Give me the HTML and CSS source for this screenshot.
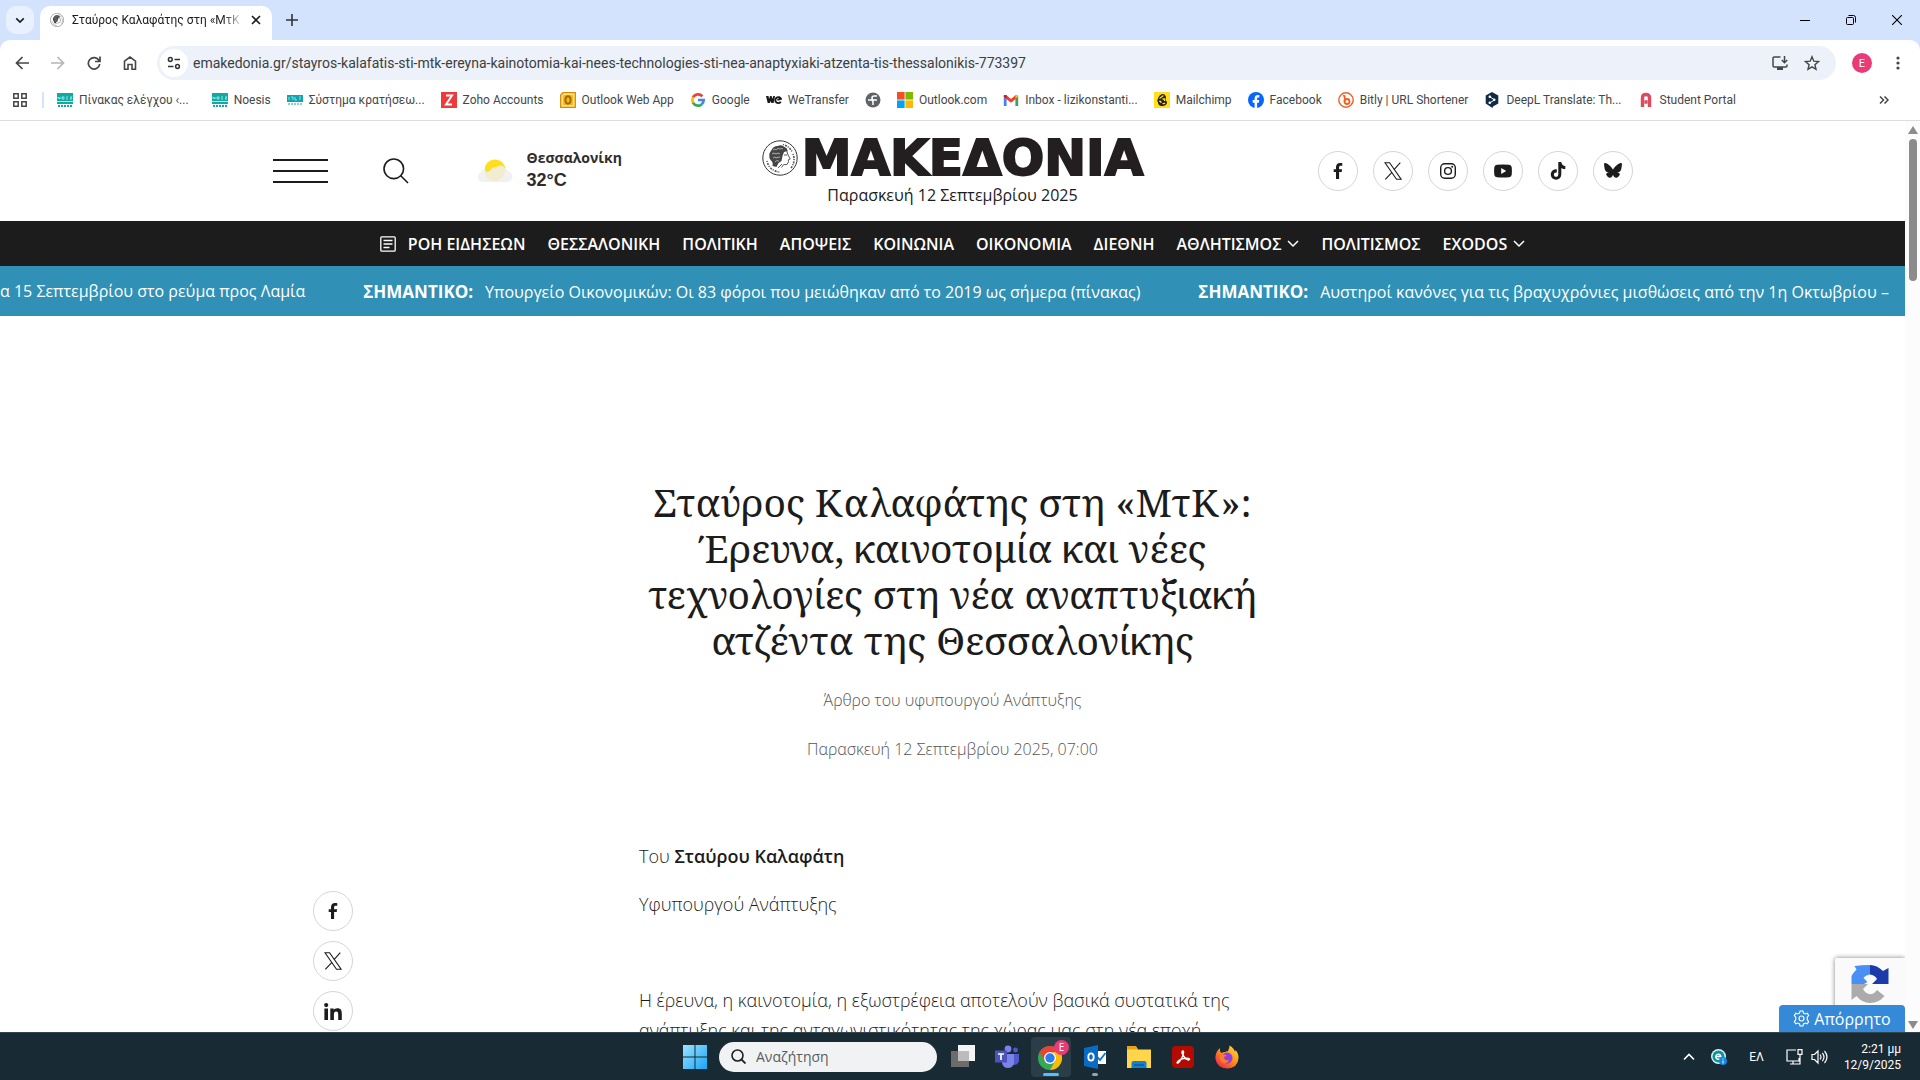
FILE: index.html
```html
<!DOCTYPE html>
<html lang="el">
<head>
<meta charset="UTF-8">
<meta name="viewport" content="width=device-width, initial-scale=1.0">
<title>Σταύρος Καλαφάτης στη «ΜτΚ»</title>
<link rel="stylesheet" href="styles.css">
</head>
<body>

<!-- Shared symbols -->
<svg class="sprite" aria-hidden="true">
<symbol id="i-facebook" viewBox="0 0 16 16"><path fill="currentColor" d="M6 16V9H3.700V6.200H6V4.200C6 1.500 7.600 0 10 0c1 0 2 .1 2.300.2v2.600h-1.500C9.500 2.800 9.100 3.400 9.100 4.400v1.800h3L11.700 9H9.100v7z"/></symbol>
<symbol id="i-x" viewBox="0 0 18 18"><path fill="none" stroke="currentColor" stroke-width="1.100" d="M1 .8h4.600l11.500 16.400h-4.600zM16.300.6l-6.500 7.200M8.200 10.100l-6.900 7.300"/></symbol>
<symbol id="i-instagram" viewBox="0 0 16 16"><g fill="none" stroke="currentColor" stroke-width="1.400"><rect x=".7" y=".7" width="14.600" height="14.600" rx="4"/><circle cx="8" cy="8" r="3.400"/></g><circle cx="12.200" cy="3.800" r="1" fill="currentColor"/></symbol>
<symbol id="i-youtube" viewBox="0 0 18 14"><path fill="currentColor" fill-rule="evenodd" d="M3 .8Q9 0 15 .8q2.500.4 2.700 2.500.4 3.700 0 7.400-.2 2.100-2.700 2.500-6 .7-12 0Q.5 12.800.3 10.700q-.4-3.700 0-7.400Q.5 1.200 3 .8zM7.200 4v6l5-3z"/></symbol>
<symbol id="i-tiktok" viewBox="0 0 16 18"><path fill="currentColor" d="M8.300 0h3c.2 2.400 1.700 3.900 4 4.100v3c-1.500 0-2.800-.4-4-1.200v6.200c0 3.600-2.400 5.700-5.200 5.700-3 0-5.300-2.300-5.300-5.200 0-3.300 2.800-5.600 6-5.200v3.200c-1.500-.4-2.900.6-2.900 2.100 0 1.200.9 2.100 2.100 2.100 1.400 0 2.300-.9 2.300-2.600z"/></symbol>
<symbol id="i-butterfly" viewBox="0 0 18 16"><path fill="currentColor" d="M9 6.800C7.800 4.400 4.600 1 1.500.1.300-.2 0 .6.100 1.700c.1 1.700.6 4.500 1 5.400.6 1.700 2 2.300 4 2.100-2.500.4-3.800 1.600-2.200 3.500C5.500 16.500 8 14.500 9 11.700c1 2.800 3.500 4.800 6.100 1 1.600-1.900.3-3.100-2.200-3.500 2 .2 3.400-.4 4-2.100.4-.9.9-3.700 1-5.400.1-1.100-.2-1.900-1.400-1.600C13.400 1 10.200 4.400 9 6.800z"/></symbol>
<symbol id="i-linkedin" viewBox="0 0 18 17"><circle cx="2.200" cy="2.100" r="2.100" fill="currentColor"/><path fill="currentColor" d="M.4 5.600h3.600V17H.4zM6.300 5.600h3.400v1.500c.6-1.100 1.900-1.800 3.600-1.800 3.700 0 4.500 2.200 4.500 5.500V17h-3.600v-5.500c0-1.500-.2-3.100-2.100-3.100s-2.200 1.500-2.200 3V17H6.300z"/></symbol>
<symbol id="i-down" viewBox="0 0 12 8"><path fill="none" stroke="currentColor" stroke-width="1.500" d="M1 1l5 5 5-5"/></symbol>
<symbol id="i-coin" viewBox="0 0 36 36"><circle cx="18" cy="18" r="17.200" fill="#fff" stroke="#333" stroke-width="1"/><path d="M7 26a14 14 0 0 0 11 6M5 21a14 14 0 0 0 2 5M21 4.500a14 14 0 0 1 9 7M31 14a14 14 0 0 1-2 14" fill="none" stroke="#555" stroke-width="1.600" stroke-dasharray="1 1.200 2 1"/><path fill="#444" d="M9.500 10q2-4 6-4 4-2 7 1 3 1 3 4l-3.500 1-1.500 4-1 5-3 2-2 4-4-1q1-4-2-6-3-5 1-10z"/><path d="M24.500 10l1.500 5 2.300 4-2 .8.200 2-1.500 2.700-3.500.2-2 2.800M22 15h3M20 24l-4 4" fill="none" stroke="#444" stroke-width=".9"/><path d="M11 10q2-2 3 0 2-3 4-1 2-1 3 0M10 14q2-2 4 0 2-2 4 0M11 18q2-2 3 0 2-1 4-1M13 22q1-2 4-1" fill="none" stroke="#ccc" stroke-width=".8"/></symbol>
<symbol id="i-noesis" viewBox="0 0 16 16"><path fill="#12a9a4" d="M0 1h16v11H0z"/><path d="M1 7V5l2 2V5M5 5h2v2H5zM9 5h2M9 7h2M13 5h2l-2 2h2" fill="none" stroke="#a5ebe4" stroke-width=".9"/><path d="M0 9.500h16" stroke="#fff" stroke-width=".8"/><path d="M1 14h14" stroke="#12a9a4" stroke-width="2" stroke-dasharray="2 1"/></symbol>
</svg>

<div class="browser">

<header class="chrome">
<div class="tab-strip">
<button class="tab-search" aria-label="Αναζήτηση καρτελών"><svg width="10" height="7" viewBox="0 0 12 8"><path d="M1.500 1.500L6 6l4.500-4.500" fill="none" stroke="#1f1f1f" stroke-width="2"/></svg></button>
<div class="tab">
<svg class="tab-icon" width="14" height="14"><use href="#i-coin"/></svg>
<span class="tab-title">Σταύρος Καλαφάτης στη «ΜτΚ</span>
<button class="icon-button" aria-label="Κλείσιμο"><svg width="10" height="10" viewBox="0 0 10 10"><path d="M1 1l8 8M9 1L1 9" stroke="#1f1f1f" stroke-width="1.600"/></svg></button>
</div>
<button class="icon-button new-tab" aria-label="Νέα καρτέλα"><svg width="12" height="12" viewBox="0 0 12 12"><path d="M6 0v12M0 6h12" stroke="#333" stroke-width="1.600"/></svg></button>
<div class="window-controls">
<button class="icon-button" aria-label="Ελαχιστοποίηση"><svg width="10" height="10" viewBox="0 0 10 10"><path d="M0 5.500h10" stroke="#000"/></svg></button>
<button class="icon-button" aria-label="Επαναφορά"><svg width="10" height="10" viewBox="0 0 10 10"><path d="M.5 3.500a1 1 0 0 1 1-1h5a1 1 0 0 1 1 1v5a1 1 0 0 1-1 1h-5a1 1 0 0 1-1-1zM2.500.5h5a2 2 0 0 1 2 2v5" fill="none" stroke="#000"/></svg></button>
<button class="icon-button" aria-label="Κλείσιμο παραθύρου"><svg width="10" height="10" viewBox="0 0 10 10"><path d="M0 0l10 10M10 0L0 10" stroke="#000" stroke-width="1.100"/></svg></button>
</div>
</div>

<div class="toolbar">
<button class="icon-button" aria-label="Πίσω"><svg width="14" height="14" viewBox="0 0 14 14"><path d="M14 7H1.500M7.500 1l-6 6 6 6" fill="none" stroke="#444746" stroke-width="1.700"/></svg></button>
<button class="icon-button" aria-label="Εμπρός"><svg width="14" height="14" viewBox="0 0 14 14"><path d="M0 7h12.500M6.500 1l6 6-6 6" fill="none" stroke="#b4b5b7" stroke-width="1.700"/></svg></button>
<button class="icon-button" aria-label="Επαναφόρτωση"><svg width="14" height="14" viewBox="0 0 14 14"><path d="M12 4.500A5.700 5.700 0 1 0 12.700 8M13 .5v5H8" fill="none" stroke="#444746" stroke-width="1.700"/></svg></button>
<button class="icon-button" aria-label="Αρχική"><svg width="14" height="14" viewBox="0 0 14 14"><path d="M1.500 5.200L7 1l5.500 4.200v8H9V8.500H5v4.700H1.500z" fill="none" stroke="#444746" stroke-width="1.600"/></svg></button>
<div class="omnibox">
<button class="site-info" aria-label="Πληροφορίες ιστοτόπου"><svg width="14" height="14" viewBox="0 0 14 14"><g fill="none" stroke="#333" stroke-width="1.500"><circle cx="3.300" cy="3.500" r="1.900"/><path d="M7.500 3.500H13M1 10.500h5.500"/><circle cx="10.500" cy="10.500" r="1.900"/></g></svg></button>
<input class="url" type="text" aria-label="Διεύθυνση" value="emakedonia.gr/stayros-kalafatis-sti-mtk-ereyna-kainotomia-kai-nees-technologies-sti-nea-anaptyxiaki-atzenta-tis-thessalonikis-773397">
<button class="icon-button" aria-label="Εγκατάσταση"><svg width="16" height="14" viewBox="0 0 16 14"><path d="M8.500 1H2.200Q1 1 1 2.200v7.600Q1 11 2.200 11h11.600q1.200 0 1.200-1.200V8.500M12.500 0v6.500M9.800 4l2.700 2.700L15.200 4" fill="none" stroke="#444746" stroke-width="1.500"/><path d="M5 11h6v3H5z" fill="#444746"/></svg></button>
<button class="icon-button" aria-label="Σελιδοδείκτης"><svg width="16" height="16" viewBox="0 0 16 16"><path d="M8 1.800l1.800 4.400 4.700.4-3.600 3.100 1.100 4.600L8 11.800l-4 2.500 1.100-4.600-3.600-3.100 4.700-.4z" fill="none" stroke="#444746" stroke-width="1.400"/></svg></button>
</div>
<button class="avatar" aria-label="Προφίλ">E</button>
<button class="icon-button" aria-label="Μενού"><svg width="4" height="14" viewBox="0 0 4 14"><g fill="#444746"><circle cx="2" cy="2" r="1.600"/><circle cx="2" cy="7" r="1.600"/><circle cx="2" cy="12" r="1.600"/></g></svg></button>
</div>

<nav class="bookmarks">
<button class="icon-button apps" aria-label="Ομάδες"><svg width="14" height="14" viewBox="0 0 14 14"><path d="M.8.8h4.400v4.400H.8zM8.800.8h4.400v4.400H8.800zM.8 8.800h4.400v4.400H.8zM8.800 8.800h4.400v4.400H8.800z" fill="none" stroke="#444746" stroke-width="1.500"/></svg></button>
<a href="#" class="bookmark wide"><svg width="16" height="16"><use href="#i-noesis"/></svg>Πίνακας ελέγχου ‹...</a>
<a href="#" class="bookmark"><svg width="16" height="16"><use href="#i-noesis"/></svg>Noesis</a>
<a href="#" class="bookmark"><svg width="16" height="16" viewBox="0 0 16 16"><path fill="#12a3b0" d="M0 3h16v7H0z"/><path d="M2 5v3M4 5h2v3M8 5v3h2M12 5h2M12 7h2" stroke="#b0eef0" fill="none" stroke-width=".8"/><path d="M1 12h14" stroke="#5cc4cc" stroke-width="1.500" stroke-dasharray="2 1"/></svg>Σύστημα κρατήσεω...</a>
<a href="#" class="bookmark"><svg width="16" height="16" viewBox="0 0 16 16"><path fill="#ed3a3a" d="M0 0h16v16H0z"/><path d="M5 3.500h6L5 12.500h6" fill="none" stroke="#fff" stroke-width="2"/></svg>Zoho Accounts</a>
<a href="#" class="bookmark"><svg width="16" height="16" viewBox="0 0 16 16"><path d="M3 .7h12.300v14.600H.7V3z" fill="#ffe47a" stroke="#d98b00" stroke-width="1.300"/><path d="M3 3h10v10H3z" fill="#f4b91b"/><ellipse cx="8" cy="8" rx="2.600" ry="3.700" fill="none" stroke="#a86600" stroke-width="1.900"/></svg>Outlook Web App</a>
<a href="#" class="bookmark"><svg width="16" height="16" viewBox="-1 -1 18 18"><g fill="none" stroke-width="3"><path d="M13 3.800A6.500 6.500 0 0 0 2.400 5" stroke="#ea4335"/><path d="M2.400 4.900a6.500 6.500 0 0 0 0 6.200" stroke="#fbbc05"/><path d="M2.300 11A6.500 6.500 0 0 0 12 13" stroke="#34a853"/><path d="M8 8h6.400c0 2-.8 3.900-2.500 5.100" stroke="#4285f4"/></g></svg>Google</a>
<a href="#" class="bookmark"><svg width="16" height="16" viewBox="0 0 16 16"><path d="M0 4h2.500l.6 3L4 4h1.600l.8 3L7.200 4H9L7.600 11H5.400l-.7-2-.8 2H1.700z" fill="#17181a"/><path d="M14.800 9.800a3 3 0 1 1 .2-3l-3.600 1" fill="none" stroke="#17181a" stroke-width="1.900"/></svg>WeTransfer</a>
<a href="#" class="bookmark" aria-label="Ιστότοπος"><svg width="16" height="16" viewBox="0 0 16 16"><circle cx="8" cy="8" r="7.500" fill="#5f6368"/><path d="M3 8h3q2 0 2 2v3M12 4H9Q7 4 7 6t2 2h3" fill="none" stroke="#fff" stroke-width="1.500"/></svg></a>
<a href="#" class="bookmark"><svg width="16" height="16" viewBox="0 0 16 16"><path fill="#f25022" d="M0 0h7.600v7.600H0z"/><path fill="#7fba00" d="M8.400 0H16v7.600H8.400z"/><path fill="#00a4ef" d="M0 8.400h7.600V16H0z"/><path fill="#ffb900" d="M8.400 8.400H16V16H8.400z"/></svg>Outlook.com</a>
<a href="#" class="bookmark"><svg width="16" height="16" viewBox="0 0 16 16"><path d="M2.200 14V4" stroke="#4285f4" stroke-width="2.800"/><path d="M13.800 14V4" stroke="#34a853" stroke-width="2.800"/><path d="M2 4l6 4.800L14 4" fill="none" stroke="#ea4335" stroke-width="3"/><path d="M.8 3h2.800v3.500L.8 5z" fill="#c5221f"/><path d="M15.200 3h-2.800v3.500L15.200 5z" fill="#fbbc04"/></svg>Inbox - lizikonstanti...</a>
<a href="#" class="bookmark"><svg width="16" height="16" viewBox="0 0 16 16"><path fill="#ffe01b" d="M0 0h16v16H0z"/><path d="M9 2Q5 2 3.500 8q-1 1 .5 2 0 4 4 4 5 0 5-4l-1.500-2 .5-3q-1-3-3-3z" fill="#241c15"/><path d="M5.500 6.500l4-3M5 9.500q2-1 2 1.500M8.500 7h2v2M8.500 11.500q1.500.5 2.500-.5" fill="none" stroke="#ffe01b" stroke-width="1.300"/></svg>Mailchimp</a>
<a href="#" class="bookmark"><svg width="16" height="16" viewBox="0 0 16 16"><circle cx="8" cy="8" r="8" fill="#0866ff"/><path d="M6.600 16v-5.300H4.700V8h1.900V6.600C6.600 4 8 3 9.900 3l1.400.1v2.400h-1c-1 0-1.200.5-1.200 1.200V8h2.100l-.4 2.700H9.100V16z" fill="#fff"/></svg>Facebook</a>
<a href="#" class="bookmark"><svg width="16" height="16" viewBox="0 0 16 16"><circle cx="8" cy="8" r="7.200" fill="#fff" stroke="#ee6123" stroke-width="1.400"/><path d="M5 3.500l1.700.7v5.500" fill="none" stroke="#ee6123" stroke-width="1.800"/><circle cx="9" cy="9.500" r="2.500" fill="none" stroke="#ee6123" stroke-width="1.800"/></svg>Bitly | URL Shortener</a>
<a href="#" class="bookmark"><svg width="16" height="16" viewBox="0 0 16 16"><path d="M8 0l6.300 3.500v8L9 14.500 8.500 16 1.700 11.500v-8z" fill="#0f2b46"/><path d="M5.500 4.500L10.500 8l-5 3" fill="none" stroke="#fff"/><g fill="#fff"><circle cx="5.800" cy="4.800" r="1.300"/><circle cx="10.200" cy="7.800" r="1.300"/><circle cx="5.800" cy="10.800" r="1.300"/></g></svg>DeepL Translate: Th...</a>
<a href="#" class="bookmark"><svg width="16" height="16" viewBox="-1 0 16 16"><path d="M3.500 15V5.500Q3.500 2.500 7 2.500t3.500 3V15M5.500 10h3" fill="none" stroke="#dd4b5c" stroke-width="3.400"/></svg>Student Portal</a>
<button class="icon-button more" aria-label="Περισσότεροι σελιδοδείκτες"><svg width="10" height="8" viewBox="0 0 10 8"><path d="M1 .5L4.500 4 1 7.500M5.500.5L9 4 5.500 7.500" fill="none" stroke="#444746" stroke-width="1.500"/></svg></button>
</nav>
</header>

<div class="viewport">
<main class="page">

<div class="masthead">
<div class="masthead-left">
<button class="burger" aria-label="Μενού"><span></span><span></span><span></span></button>
<button class="icon-button search" aria-label="Αναζήτηση"><svg width="26" height="26" viewBox="0 0 26 26"><circle cx="10.800" cy="10.800" r="9.800" fill="none" stroke="#1c1c1c" stroke-width="1.600"/><path d="M17.500 17.500l7.500 7.500" stroke="#1c1c1c" stroke-width="1.600"/></svg></button>
<div class="weather">
<svg width="36" height="24" viewBox="0 0 36 24"><circle cx="18" cy="11" r="10.500" fill="#ffdd1f"/><path d="M5 23a5 5 0 0 1-.5-9.800q1-3 4-2.200L9 15q1-3 4-3 2-4 6-3.500 4-3 8-.5 1 1 1 3 3-1 4 2 4 1 3.500 5T30 23z" fill="#f3f0f0"/><path d="M8 15q1-3 5-3 2-4 6-3.500 4-3 8-.5 2 7-2 11-6 5-12 2-4-2-5-6z" fill="#f2ecd0"/></svg>
<div class="weather-text"><div class="city">Θεσσαλονίκη</div><div class="degrees">32°C</div></div>
</div>
</div>
<div class="brand">
<a href="#" class="logo"><svg width="36" height="36"><use href="#i-coin"/></svg><span>MAKEΔONIA</span></a>
<div class="today">Παρασκευή 12 Σεπτεμβρίου 2025</div>
</div>
<div class="socials">
<a href="#" class="round" aria-label="Facebook"><svg width="16" height="16"><use href="#i-facebook"/></svg></a>
<a href="#" class="round" aria-label="X"><svg width="18" height="18"><use href="#i-x"/></svg></a>
<a href="#" class="round" aria-label="Instagram"><svg width="16" height="16"><use href="#i-instagram"/></svg></a>
<a href="#" class="round" aria-label="YouTube"><svg width="18" height="14"><use href="#i-youtube"/></svg></a>
<a href="#" class="round" aria-label="TikTok"><svg width="16" height="18"><use href="#i-tiktok"/></svg></a>
<a href="#" class="round" aria-label="Bluesky"><svg width="18" height="16"><use href="#i-butterfly"/></svg></a>
</div>
</div>

<nav class="main-nav">
<a href="#" class="feed"><svg width="16" height="16" viewBox="0 0 16 16"><rect x=".8" y=".8" width="14.400" height="14.400" rx="1" fill="none" stroke="#fff" stroke-width="1.300"/><path d="M3.500 4.500h9M3.500 8h9M3.500 11.500h6" stroke="#fff" stroke-width="1.300"/></svg>ΡΟΗ ΕΙΔΗΣΕΩΝ</a>
<a href="#">ΘΕΣΣΑΛΟΝΙΚΗ</a>
<a href="#">ΠΟΛΙΤΙΚΗ</a>
<a href="#">ΑΠΟΨΕΙΣ</a>
<a href="#">ΚΟΙΝΩΝΙΑ</a>
<a href="#">ΟΙΚΟΝΟΜΙΑ</a>
<a href="#">ΔΙΕΘΝΗ</a>
<a href="#">ΑΘΛΗΤΙΣΜΟΣ<svg width="12" height="8"><use href="#i-down"/></svg></a>
<a href="#">ΠΟΛΙΤΙΣΜΟΣ</a>
<a href="#">EXODOS<svg width="12" height="8"><use href="#i-down"/></svg></a>
</nav>

<div class="ticker">
<a href="#">α 15 Σεπτεμβρίου στο ρεύμα προς Λαμία</a>
<a href="#"><b>ΣΗΜΑΝΤΙΚΟ:</b>Υπουργείο Οικονομικών: Οι 83 φόροι που μειώθηκαν από το 2019 ως σήμερα (πίνακας)</a>
<a href="#"><b>ΣΗΜΑΝΤΙΚΟ:</b>Αυστηροί κανόνες για τις βραχυχρόνιες μισθώσεις από την 1η Οκτωβρίου –</a>
</div>

<article class="article">
<h1>Σταύρος Καλαφάτης στη «ΜτΚ»: Έρευνα, καινοτομία και νέες τεχνολογίες στη νέα αναπτυξιακή ατζέντα της Θεσσαλονίκης</h1>
<p class="lead">Άρθρο του υφυπουργού Ανάπτυξης</p>
<time class="published" datetime="2025-09-12T07:00">Παρασκευή 12 Σεπτεμβρίου 2025, 07:00</time>
<div class="article-row">
<div class="share">
<a href="#" class="round" aria-label="Facebook"><svg width="16" height="16"><use href="#i-facebook"/></svg></a>
<a href="#" class="round" aria-label="X"><svg width="18" height="18"><use href="#i-x"/></svg></a>
<a href="#" class="round" aria-label="LinkedIn"><svg width="18" height="17"><use href="#i-linkedin"/></svg></a>
</div>
<div class="story">
<p>Του <b>Σταύρου Καλαφάτη</b></p>
<p>Υφυπουργού Ανάπτυξης</p>
<p>&nbsp;</p>
<p>Η έρευνα, η καινοτομία, η εξωστρέφεια αποτελούν βασικά συστατικά της<br>ανάπτυξης και της ανταγωνιστικότητας της χώρας μας στη νέα εποχή</p>
</div>
</div>
</article>

<div class="recaptcha"><svg width="38" height="38" viewBox="0 0 38 38"><path d="M19 0v9.500q-4.500.5-6.500 3.500l4 4-3.500 2H.5V11Q2 8 5.500 4.500L3.500 1q7-1 15.500-1z" fill="#4a90f4"/><path d="M19 0q7 0 13 6l5.500-3v16H21l5-5q-2-4-7-4.500z" fill="#1c3aa9"/><path d="M.5 19H17l-5 5q3 6 9 5 3-1 5-4l7.500 6Q28 38 19 38 11 38 5.500 31L.5 35z" fill="#ababab"/></svg></div>
<button class="privacy"><svg width="17" height="17" viewBox="0 0 18 18"><g fill="none" stroke="#fff" stroke-width="1.200"><path d="M7.500 1h3l.6 2.300 1.800.9 2.200-.9 1.500 2.400-1.500 1.900v2.800l1.500 1.900-1.500 2.400-2.200-.9-1.800.9-.6 2.300h-3l-.6-2.300-1.800-.9-2.200.9-1.500-2.400 1.500-1.900V7.600L1.400 5.700l1.500-2.400 2.200.9 1.800-.9z"/><circle cx="9" cy="9" r="2.600"/></g></svg>Απόρρητο</button>
</main>

<div class="scrollbar"><span class="arrow up"></span><span class="thumb"></span><span class="arrow down"></span></div>
</div>
</div>

<footer class="taskbar">
<div class="task-apps">
<button class="app" aria-label="Έναρξη"><svg width="24" height="24" viewBox="0 0 24 24"><defs><linearGradient id="win" x2="1" y2="1"><stop stop-color="#9be4ff"/><stop offset="1" stop-color="#1aa4f5"/></linearGradient></defs><path fill="url(#win)" d="M0 0h11.500v11.500H0zM12.500 0H24v11.500H12.500zM0 12.500h11.500V24H0zM12.500 12.500H24V24H12.500z"/></svg></button>
<label class="task-search"><svg width="15" height="15" viewBox="0 0 15 15"><circle cx="6.500" cy="6.500" r="5.500" fill="none" stroke="#222" stroke-width="1.600"/><path d="M10.500 10.500l4 4" stroke="#222" stroke-width="1.800"/></svg><input type="text" placeholder="Αναζήτηση" aria-label="Αναζήτηση"></label>
<button class="app" aria-label="Προβολή εργασιών"><svg width="24" height="24" viewBox="0 0 24 24"><path fill="#6c6c6c" d="M0 6h18v16H0z"/><path fill="#f4f4f4" d="M7 0h17v16H7z"/><path fill="#bcbcbc" d="M7 6h11v10H7z"/></svg></button>
<button class="app" aria-label="Teams"><svg width="24" height="24" viewBox="0 0 24 24"><circle cx="13" cy="4" r="3.400" fill="#7b83eb"/><circle cx="20.500" cy="5" r="2.400" fill="#5059c9"/><path fill="#5059c9" d="M16 9h8v7q-1 4.500-6 4z"/><path fill="#7b83eb" d="M7 9h12v9q-1 5-6 5-5 0-6-5z"/><path fill="#4b53bc" d="M0 5.500h12v12H0z"/><path d="M3 9h6M6 9v6" stroke="#fff" stroke-width="1.700"/></svg></button>
<button class="app active" aria-label="Chrome"><svg width="26" height="26" viewBox="0 0 26 26"><circle cx="12" cy="14" r="12" fill="#34a853"/><path d="M1.600 8A12 12 0 0 1 22.400 8H12z" fill="#ea4335"/><path d="M1.600 8l5.200 9L12 14l3-6H1.600z" fill="#ea4335"/><path d="M22.400 8A12 12 0 0 1 12 26l5.200-9L15 8z" fill="#fbbc04"/><circle cx="12" cy="14" r="6" fill="#fff"/><circle cx="12" cy="14" r="4.700" fill="#2b7de9"/></svg><span class="app-badge">E</span></button>
<button class="app running" aria-label="Outlook"><svg width="24" height="24" viewBox="0 0 24 24"><path fill="#fff" d="M12 6h11v13H12z"/><path d="M13.500 11l3.500 4 5.500-7" fill="none" stroke="#1276cf" stroke-width="1.800"/><path fill="#0a6bc4" d="M1 3L15 0v24L1 21z"/><ellipse cx="8" cy="12" rx="2.700" ry="3.600" fill="none" stroke="#fff" stroke-width="1.800"/></svg></button>
<button class="app" aria-label="Εξερεύνηση αρχείων"><svg width="24" height="24" viewBox="0 0 24 24"><path fill="#e7a31a" d="M0 1h9l2 3v5H0z"/><path fill="#ffd54a" d="M0 4.500h24V23H0z"/><path fill="#1780cc" d="M4.500 23v-5q0-2 2-2h11q2 0 2 2v5z"/><path d="M7 20h10" stroke="#0b5ba0" stroke-width="1.500"/></svg></button>
<button class="app" aria-label="Acrobat"><svg width="22" height="22" viewBox="0 0 22 22"><rect width="22" height="22" rx="4" fill="#b30b00"/><path d="M11 5c-3 0 1 6 3 8 2 1.500 4 1 3.500 0S11 11.500 7.500 14c-3 2-3 3.500-1.500 3 2-1 5-7 5.500-10 .1-1.300 0-2-.5-2z" fill="none" stroke="#fff" stroke-width="1.400"/></svg></button>
<button class="app" aria-label="Firefox"><svg width="24" height="24" viewBox="0 0 24 24"><defs><linearGradient id="fox" x1="1" y1="0" x2=".2" y2="1"><stop stop-color="#ffe14a"/><stop offset=".5" stop-color="#ff9418"/><stop offset="1" stop-color="#f0254e"/></linearGradient></defs><path d="M3 5q-3 4-2.500 9Q2 23 12 23.500 23 23 23.500 13q0-5-3-8l-.5 2Q19 3 14.500.5q0 3-1.500 5.500l-3 1q-2 0-3.500 1Q4.500 7 5 3z" fill="url(#fox)"/><circle cx="12" cy="13" r="5.500" fill="#8f3fe0"/><path d="M5 10q4-2 7 1-3 0-3 2 1 3 5 2-2 4-6 3-4-2-3-8z" fill="#ff7a2a"/></svg></button>
</div>
<div class="tray">
<svg width="12" height="8" viewBox="0 0 12 8"><path d="M1 6.500l5-5 5 5" fill="none" stroke="#fff" stroke-width="1.600"/></svg>
<svg width="16" height="16" viewBox="0 0 16 16"><circle cx="7.500" cy="7.500" r="7.500" fill="#d9f3f4"/><circle cx="7.500" cy="7.500" r="6" fill="#0796a0"/><path d="M4.800 7.500h5a2.500 2.500 0 1 0-1 2.300" fill="none" stroke="#fff" stroke-width="1.500"/><circle cx="12" cy="12" r="4" fill="#1687e0"/><path d="M12 9.500v1M12 11.500v3" stroke="#fff"/></svg>
<span class="lang">ΕΛ</span>
<div class="status">
<svg width="17" height="16" viewBox="0 0 17 16"><path d="M10 1H1v11h12V9M7 12v3M4 15h7M12 .7h4v4.600h-4zM14 5.300V15h-3" fill="none" stroke="#fff" stroke-width="1.200"/></svg>
<svg width="17" height="16" viewBox="0 0 17 16"><path d="M1 5.500h2.500L7 2v12l-3.500-3.500H1zM9 5.500q2 2.500 0 5M11.300 3.800q3.400 4.200 0 8.400M13.500 2q5 6 0 12" fill="none" stroke="#fff" stroke-width="1.200"/></svg>
</div>
<div class="clock">2:21 μμ<br>12/9/2025</div>
</div>
</footer>

</body>
</html>
```
FILE: styles.css
```css
* {
box-sizing: border-box;
}
body {
margin: 0;
height: 100vh;
display: flex;
flex-direction: column;
overflow: hidden;
background: #fff;
color: #1c1c1c;
font-family: "Open Sans", "Noto Sans", sans-serif;
}
a {
color: inherit;
text-decoration: none;
}
button {
padding: 0;
border: 0;
background: none;
color: inherit;
font: inherit;
cursor: pointer;
}
svg {
display: block;
flex: none;
}
.sprite {
position: absolute;
width: 0;
height: 0;
}
.icon-button {
display: flex;
align-items: center;
justify-content: center;
width: 36px;
height: 34px;
flex: none;
}

/* Browser window */
.browser {
flex: 1;
min-height: 0;
display: flex;
flex-direction: column;
}
.chrome {
flex: none;
background: #d3e3fd;
border-bottom: 1px solid #dcdde0;
font-family: Roboto, sans-serif;
font-size: 12px;
}
.tab-strip {
height: 40px;
padding: 6px 0 0 6px;
display: flex;
}
.tab-search {
width: 28px;
height: 28px;
display: flex;
align-items: center;
justify-content: center;
background: #e9f1fe;
border-radius: 10px;
}
.tab {
width: 232px;
height: 34px;
margin-left: 6px;
padding: 0 4px 6px 10px;
display: flex;
align-items: center;
background: #fff;
border-radius: 10px 10px 0 0;
}
.tab .icon-button {
width: 24px;
height: 28px;
}
.tab-title {
flex: 1;
margin-left: 8px;
overflow: hidden;
white-space: nowrap;
mask-image: linear-gradient(to right, #000 88%, transparent);
}
.new-tab {
height: 28px;
margin-left: 2px;
}
.window-controls {
margin-left: auto;
display: flex;
}
.window-controls .icon-button {
width: 46px;
height: 28px;
}
.toolbar {
height: 42px;
padding: 4px 4px 0;
display: flex;
align-items: center;
background: #fff;
border-radius: 10px 10px 0 0;
}
.omnibox {
flex: 1;
height: 34px;
margin: 0 9px;
padding: 0 8px 0 3px;
display: flex;
align-items: center;
background: #ecf1fa;
border-radius: 17px;
}
.omnibox .icon-button {
width: 32px;
}
.site-info {
width: 28px;
height: 28px;
display: flex;
align-items: center;
justify-content: center;
background: #fff;
border-radius: 50%;
}
.url {
flex: 1;
padding: 0 5px;
border: 0;
background: none;
color: #3c3e40;
font: 14px Roboto, sans-serif;
}
.avatar {
width: 20px;
height: 20px;
margin: 0 8px 0 7px;
background: #e93b77;
border-radius: 50%;
color: #fff;
font-size: 11px;
}
.bookmarks {
height: 38px;
padding: 0 18px 2px 0;
display: flex;
align-items: center;
background: #fff;
color: #444746;
}
.bookmark {
display: flex;
align-items: center;
gap: 6px;
margin-right: 16px;
white-space: nowrap;
}
.bookmark.wide {
margin-right: 23px;
}
.apps {
width: 44px;
margin-right: 13px;
padding-right: 4px;
padding-left: 2px;
height: 16px;
border-right: 2px solid #d3e3fd;
}
.more {
margin-left: auto;
}
.viewport {
flex: 1;
min-height: 0;
display: flex;
}
.page {
position: relative;
flex: 1;
min-width: 0;
overflow: hidden;
}
.scrollbar {
width: 15px;
padding: 5px 3px 3px;
display: flex;
flex-direction: column;
align-items: center;
background: #fcfcfc;
}
.thumb {
width: 8px;
height: 142px;
margin: 5px 0 auto;
background: #8b8b8b;
border-radius: 4px;
}
.arrow {
border: 5px solid transparent;
border-top: 0;
border-bottom: 8px solid #8b8b8b;
}
.arrow.down {
border-top: 8px solid #8b8b8b;
border-bottom: 0;
}

/* Site header */
.masthead {
max-width: 1360px;
height: 100px;
margin: 0 auto;
display: grid;
grid-template-columns: 1fr auto 1fr;
}
.masthead-left {
display: flex;
align-items: center;
}
.burger {
width: 55px;
display: flex;
flex-direction: column;
gap: 9px;
}
.burger span {
height: 2px;
background: #1c1c1c;
}
.search {
width: 26px;
margin: 0 68px 0 55px;
}
.weather {
display: flex;
align-items: center;
gap: 14px;
color: #2d2d2d;
font-weight: 700;
line-height: 22px;
}
.weather-text {
padding-bottom: 5px;
}
.city {
font-size: 14px;
}
.degrees {
font-family: "Liberation Sans", sans-serif;
font-size: 18px;
}
.brand {
padding-top: 19px;
text-align: center;
}
.logo {
display: flex;
align-items: center;
justify-content: center;
gap: 4px;
height: 36px;
color: #231f20;
font: 700 50px "DejaVu Sans", sans-serif;
-webkit-text-stroke: 2px #231f20;
}
.today {
margin-top: 7px;
font-size: 16px;
line-height: 24px;
}
.socials {
display: flex;
align-items: center;
justify-content: flex-end;
gap: 15px;
}
.round {
width: 40px;
height: 40px;
display: flex;
align-items: center;
justify-content: center;
border: 1px solid #d5d5d5;
border-radius: 50%;
}
.main-nav {
height: 45px;
display: flex;
align-items: center;
justify-content: center;
gap: 22px;
background: #1c1c1c;
color: #fff;
font-size: 16px;
font-weight: 600;
}
.main-nav a {
display: flex;
align-items: center;
gap: 6px;
white-space: nowrap;
}
.main-nav .feed {
gap: 12px;
}
.ticker {
height: 50px;
display: flex;
align-items: center;
gap: 58px;
overflow: hidden;
background: #3090b5;
color: #fff;
font-size: 16px;
white-space: nowrap;
}
.ticker b {
margin-right: 12px;
font-size: 17px;
}

/* Article */
.article {
max-width: 1360px;
margin: 0 auto;
padding-top: 163px;
text-align: center;
}
.article h1 {
max-width: 630px;
margin: 0 auto;
font: 400 39px "Noto Serif", "DejaVu Serif Condensed", "DejaVu Serif", serif;
line-height: 46px;
}
.lead {
margin: 25px 0;
color: #555;
font-size: 16px;
font-weight: 300;
line-height: 24px;
}
.published {
display: block;
color: #555;
font-size: 16px;
font-weight: 300;
line-height: 24px;
}
.article-row {
margin-top: 80px;
display: grid;
grid-template-columns: 1fr 627px 1fr;
text-align: left;
}
.share {
padding: 50px 0 0 40px;
display: flex;
flex-direction: column;
gap: 10px;
}
.story {
font-size: 18px;
font-weight: 300;
line-height: 30px;
}
.story p {
margin: 0 0 18px;
}
.story b {
font-weight: 600;
}
.recaptcha {
position: absolute;
right: 0;
bottom: 0;
width: 70px;
height: 74px;
padding: 7px 16px;
background: #fafafa;
border-radius: 2px 0 0 2px;
box-shadow: 0 0 5px #808080;
}
.privacy {
position: absolute;
right: 0;
bottom: 0;
width: 126px;
height: 27px;
display: flex;
align-items: center;
justify-content: center;
gap: 4px;
background: #348ad9;
border-radius: 4px 4px 0 0;
color: #fff;
font-size: 16px;
}

/* Windows taskbar */
.taskbar {
position: relative;
flex: none;
height: 48px;
padding-left: 2px;
display: flex;
align-items: center;
justify-content: center;
background: #182a33;
border-top: 1px solid #33454c;
color: #fff;
}
.task-apps {
display: flex;
align-items: center;
gap: 4px;
}
.app {
position: relative;
width: 40px;
height: 40px;
display: flex;
align-items: center;
justify-content: center;
border-radius: 4px;
}
.app.active {
background: #2b3d46;
}
.app.active::after,
.app.running::after {
content: "";
position: absolute;
bottom: 1px;
width: 6px;
height: 3px;
background: #9aa3a8;
border-radius: 2px;
}
.app.active::after {
width: 16px;
background: #4cc2ff;
}
.app-badge {
position: absolute;
top: 3px;
right: 2px;
width: 15px;
height: 15px;
background: #e93b77;
border-radius: 50%;
font-size: 10px;
line-height: 15px;
}
.task-search {
width: 218px;
height: 30px;
margin-right: 2px;
padding: 0 12px;
display: flex;
align-items: center;
gap: 10px;
background: #f0f2f4;
border-radius: 15px;
}
.task-search input {
flex: 1;
min-width: 0;
padding: 0;
border: 0;
background: none;
font: 14px "Open Sans", sans-serif;
}
.task-search input::placeholder {
color: #5a5d60;
}
.tray {
position: absolute;
right: 19px;
height: 46px;
display: flex;
align-items: center;
gap: 16px;
font-family: Roboto, sans-serif;
font-size: 12px;
}
.status {
display: flex;
gap: 8px;
}
.lang {
margin: 0 6px;
}
.clock {
line-height: 16px;
text-align: right;
}
```
